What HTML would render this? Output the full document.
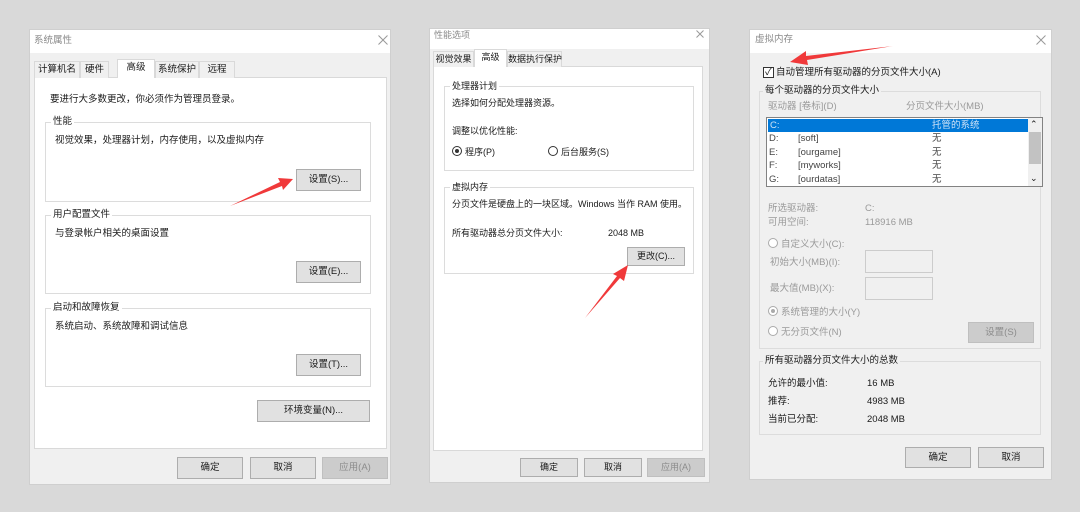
<!DOCTYPE html>
<html><head><meta charset="utf-8"><style>
*{margin:0;padding:0;box-sizing:border-box}
body{width:1080px;height:512px;background:#d9d9d9;position:relative;overflow:hidden;font-family:"Liberation Sans","Noto Sans CJK SC",sans-serif;font-size:9.5px;color:#1a1a1a}
.a{position:absolute;white-space:nowrap;line-height:12px}
.dlg{position:absolute;background:#f0f0f0;border:1px solid #cfcfcf}
.tb{position:absolute;left:0;right:0;top:0;background:#fff}
.ttl{color:#8a8a8a}
.tab{position:absolute;background:#f0f0f0;border:1px solid #d9d9d9;border-bottom:none;text-align:center;line-height:16px;white-space:nowrap}
.tab.on{background:#fff;z-index:2}
.panel{position:absolute;background:#fff;border:1px solid #d9d9d9}
.grp{position:absolute;border:1px solid #dcdcdc}
.gl{position:absolute;background:#fff;padding:0 2px;line-height:12px;top:-7px;left:5px;white-space:nowrap}
.btn{position:absolute;background:#e1e1e1;border:1px solid #adadad;text-align:center;white-space:nowrap}
.btn.dis{background:#cccccc;border-color:#bfbfbf;color:#8c8c8c}
.g{color:#9a9a9a}
.rad{display:inline-block;width:10px;height:10px;border:1px solid #333;border-radius:50%;vertical-align:-1px;margin-right:3px;position:relative;background:#fff}
.rad.g2{border-color:#aaa}
</style></head><body>

<!-- LEFT -->
<div class="dlg" style="left:29px;top:29px;width:362px;height:456px">
 <div class="tb" style="height:23px"></div>
</div>
<div class="a ttl" style="left:34px;top:35px">系统属性</div>
<svg style="position:absolute;left:378px;top:35px" width="10" height="10"><path d="M0.5 0.5L9.5 9.5M9.5 0.5L0.5 9.5" stroke="#999" stroke-width="1"/></svg>
<div class="panel" style="left:34px;top:77px;width:353px;height:372px"></div>
<div class="tab" style="left:34px;top:61px;width:46px;height:17px">计算机名</div>
<div class="tab" style="left:80px;top:61px;width:29px;height:17px">硬件</div>
<div class="tab on" style="left:117px;top:59px;width:38px;height:19px">高级</div>
<div class="tab" style="left:155px;top:61px;width:44px;height:17px">系统保护</div>
<div class="tab" style="left:199px;top:61px;width:36px;height:17px">远程</div>
<div class="a" style="left:50px;top:94px">要进行大多数更改，你必须作为管理员登录。</div>
<div class="grp" style="left:45px;top:122px;width:326px;height:80px"><div class="gl">性能</div></div>
<div class="a" style="left:55px;top:135px">视觉效果，处理器计划，内存使用，以及虚拟内存</div>
<div class="btn" style="left:296px;top:169px;width:65px;height:22px;line-height:20px">设置(S)...</div>
<div class="grp" style="left:45px;top:215px;width:326px;height:79px"><div class="gl">用户配置文件</div></div>
<div class="a" style="left:55px;top:228px">与登录帐户相关的桌面设置</div>
<div class="btn" style="left:296px;top:261px;width:65px;height:22px;line-height:20px">设置(E)...</div>
<div class="grp" style="left:45px;top:308px;width:326px;height:79px"><div class="gl">启动和故障恢复</div></div>
<div class="a" style="left:55px;top:321px">系统启动、系统故障和调试信息</div>
<div class="btn" style="left:296px;top:354px;width:65px;height:22px;line-height:20px">设置(T)...</div>
<div class="btn" style="left:257px;top:400px;width:113px;height:22px;line-height:20px">环境变量(N)...</div>
<div class="btn" style="left:177px;top:457px;width:66px;height:22px;line-height:20px">确定</div>
<div class="btn" style="left:250px;top:457px;width:66px;height:22px;line-height:20px">取消</div>
<div class="btn dis" style="left:322px;top:457px;width:66px;height:22px;line-height:20px">应用(A)</div>

<!-- MIDDLE -->
<div class="dlg" style="left:429px;top:28px;width:281px;height:455px">
 <div class="tb" style="height:20px"></div>
</div>
<div class="a ttl" style="left:434px;top:29px;font-size:9px">性能选项</div>
<svg style="position:absolute;left:696px;top:30px" width="8" height="8"><path d="M0.5 0.5L7.5 7.5M7.5 0.5L0.5 7.5" stroke="#999" stroke-width="1"/></svg>
<div class="panel" style="left:433px;top:66px;width:270px;height:385px"></div>
<div class="tab" style="left:433px;top:51px;width:41px;height:16px;font-size:9px;line-height:15px">视觉效果</div>
<div class="tab on" style="left:474px;top:49px;width:33px;height:18px;font-size:9px;line-height:15px">高级</div>
<div class="tab" style="left:507px;top:51px;width:55px;height:16px;font-size:9px;line-height:15px">数据执行保护</div>
<div class="grp" style="left:444px;top:86px;width:250px;height:85px"><div class="gl" style="font-size:9px">处理器计划</div></div>
<div class="a" style="left:452px;top:97px;font-size:9px">选择如何分配处理器资源。</div>
<div class="a" style="left:452px;top:125px;font-size:9px">调整以优化性能:</div>
<div class="a" style="left:452px;top:146px;font-size:9px"><span class="rad"><span style="position:absolute;left:2px;top:2px;width:4px;height:4px;background:#333;border-radius:50%"></span></span>程序(P)</div>
<div class="a" style="left:548px;top:146px;font-size:9px"><span class="rad"></span>后台服务(S)</div>
<div class="grp" style="left:444px;top:187px;width:250px;height:87px"><div class="gl" style="font-size:9px">虚拟内存</div></div>
<div class="a" style="left:452px;top:198px;font-size:9px">分页文件是硬盘上的一块区域。Windows 当作 RAM 使用。</div>
<div class="a" style="left:452px;top:227px;font-size:9px">所有驱动器总分页文件大小:</div>
<div class="a" style="left:608px;top:227px;font-size:9px">2048 MB</div>
<div class="btn" style="left:627px;top:247px;width:58px;height:19px;line-height:17px;font-size:9px">更改(C)...</div>
<div class="btn" style="left:520px;top:458px;width:58px;height:19px;line-height:17px;font-size:9px">确定</div>
<div class="btn" style="left:584px;top:458px;width:58px;height:19px;line-height:17px;font-size:9px">取消</div>
<div class="btn dis" style="left:647px;top:458px;width:58px;height:19px;line-height:17px;font-size:9px">应用(A)</div>

<!-- RIGHT -->
<div class="dlg" style="left:749px;top:29px;width:303px;height:451px">
 <div class="tb" style="height:23px"></div>
</div>
<div class="a ttl" style="left:755px;top:34px">虚拟内存</div>
<svg style="position:absolute;left:1036px;top:35px" width="10" height="10"><path d="M0.5 0.5L9.5 9.5M9.5 0.5L0.5 9.5" stroke="#999" stroke-width="1"/></svg>
<div style="position:absolute;left:763px;top:67px;width:11px;height:11px;border:1px solid #333;background:#fff;font-size:10px;line-height:9px;text-align:center">✓</div>
<div class="a" style="left:776px;top:67px">自动管理所有驱动器的分页文件大小(A)</div>
<div class="grp" style="left:759px;top:91px;width:282px;height:258px"><div class="gl" style="background:#f0f0f0;left:3px">每个驱动器的分页文件大小</div></div>
<div class="a g" style="left:768px;top:101px">驱动器 [卷标](D)</div>
<div class="a g" style="left:906px;top:101px">分页文件大小(MB)</div>
<div style="position:absolute;left:766px;top:117px;width:277px;height:70px;background:#fff;border:1px solid #828282"></div>
<div style="position:absolute;left:768px;top:119px;width:260px;height:13px;background:#0078d7"></div>
<div class="a" style="left:770px;top:120px;color:#cfe3f7">C:</div>
<div class="a" style="left:932px;top:120px;color:#cfe3f7">托管的系统</div>
<div style="position:absolute;left:1028px;top:118px;width:14px;height:68px;background:#f0f0f0"></div>
<div style="position:absolute;left:1029px;top:132px;width:12px;height:32px;background:#c2c2c2"></div>
<div class="a" style="left:1030px;top:118px;font-size:9px">⌃</div>
<div class="a" style="left:1030px;top:172px;font-size:9px">⌄</div>
<div class="a" style="left:769px;top:132px;color:#444;line-height:13.5px">D:<br>E:<br>F:<br>G:</div>
<div class="a" style="left:798px;top:132px;color:#444;line-height:13.5px">[soft]<br>[ourgame]<br>[myworks]<br>[ourdatas]</div>
<div class="a" style="left:932px;top:132px;color:#444;line-height:13.5px">无<br>无<br>无<br>无</div>
<div class="a g" style="left:768px;top:203px">所选驱动器:</div>
<div class="a g" style="left:865px;top:203px">C:</div>
<div class="a g" style="left:768px;top:217px">可用空间:</div>
<div class="a g" style="left:865px;top:217px">118916 MB</div>
<div class="a g" style="left:768px;top:238px"><span class="rad g2"></span>自定义大小(C):</div>
<div class="a g" style="left:770px;top:257px">初始大小(MB)(I):</div>
<div style="position:absolute;left:865px;top:250px;width:68px;height:23px;border:1px solid #ccc"></div>
<div class="a g" style="left:770px;top:283px">最大值(MB)(X):</div>
<div style="position:absolute;left:865px;top:277px;width:68px;height:23px;border:1px solid #ccc"></div>
<div class="a g" style="left:768px;top:306px"><span class="rad g2"><span style="position:absolute;left:2px;top:2px;width:4px;height:4px;background:#aaa;border-radius:50%"></span></span>系统管理的大小(Y)</div>
<div class="a g" style="left:768px;top:326px"><span class="rad g2"></span>无分页文件(N)</div>
<div class="btn dis" style="left:968px;top:322px;width:66px;height:21px;line-height:19px">设置(S)</div>
<div class="grp" style="left:759px;top:361px;width:282px;height:74px"><div class="gl" style="background:#f0f0f0;left:3px">所有驱动器分页文件大小的总数</div></div>
<div class="a" style="left:768px;top:378px">允许的最小值:</div><div class="a" style="left:867px;top:378px">16 MB</div>
<div class="a" style="left:768px;top:396px">推荐:</div><div class="a" style="left:867px;top:396px">4983 MB</div>
<div class="a" style="left:768px;top:414px">当前已分配:</div><div class="a" style="left:867px;top:414px">2048 MB</div>
<div class="btn" style="left:905px;top:447px;width:66px;height:21px;line-height:19px">确定</div>
<div class="btn" style="left:978px;top:447px;width:66px;height:21px;line-height:19px">取消</div>

<!-- arrows -->
<svg style="position:absolute;left:0;top:0" width="1080" height="512">
 <g fill="#f0393a">
  <polygon points="230,206 280,182 278,178 293,179 283,190 282,186"/>
  <polygon points="585,318 617,276 613,274 628,265 624,281 620,278"/>
  <polygon points="893,46 806,56 806,51 790,62 808,65 807,60"/>
 </g>
</svg>
</body></html>
